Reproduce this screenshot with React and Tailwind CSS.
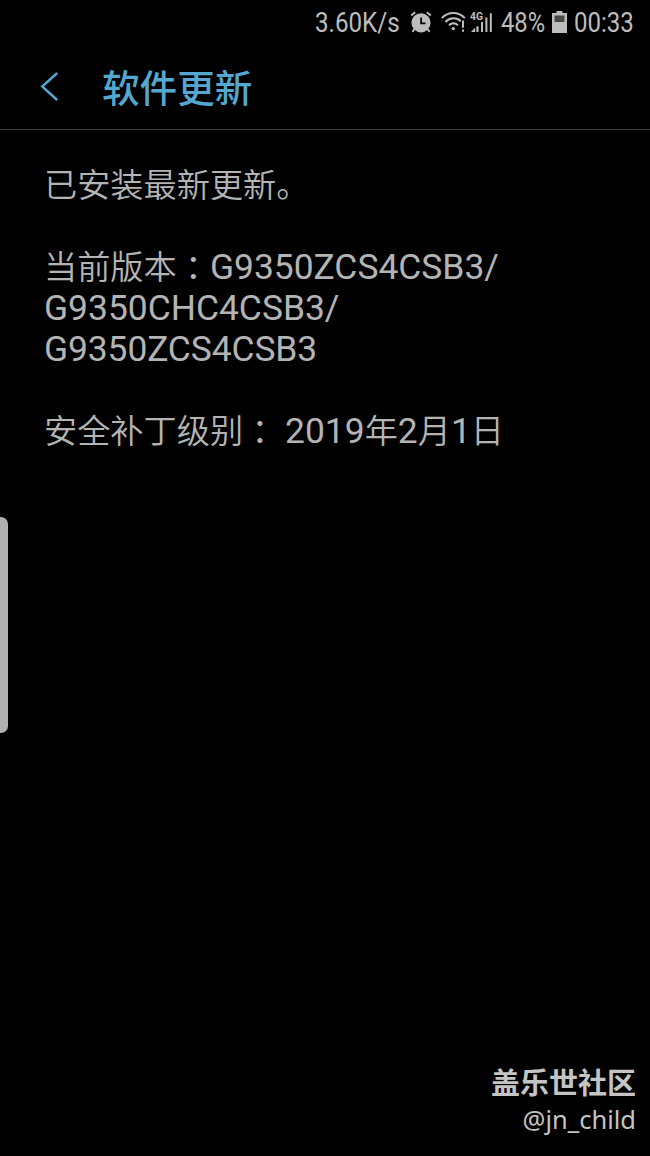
import React from 'react';

const AlarmIcon = () => (
  <svg className="w-[22px] h-[22px]" viewBox="0 0 22 22" fill="none">
    <circle cx="11" cy="11.8" r="9.6" fill="#bdbdbd" />
    <path d="M1.2 4.6 5.2 1.2M20.8 4.6 16.8 1.2" stroke="#bdbdbd" strokeWidth="2" />
    <path d="M4.5 18 2.4 20.8M17.5 18l2.1 2.8" stroke="#bdbdbd" strokeWidth="2" />
    <path d="M11.1 6.4v6h4.4" stroke="#050505" strokeWidth="1.8" />
  </svg>
);

const WifiIcon = () => (
  <svg className="w-[25px] h-[22px]" viewBox="0 0 25 22" fill="none" stroke="#bdbdbd">
    <path d="M.8 7.2C7 .3 17.6.3 23.8 7.2" strokeWidth="2" />
    <path d="M4.4 11c4.4-4.8 11.4-4.8 15.4-.8" strokeWidth="2" />
    <path d="M8 14.4c2.6-2.8 6.4-2.8 9 0" strokeWidth="2" />
    <circle cx="12.3" cy="17.6" r="1.7" fill="#bdbdbd" stroke="none" />
    <path d="M22 9.4v7.4M22 18.6v2.2" strokeWidth="2" />
  </svg>
);

const SignalIcon = () => (
  <svg className="w-[23px] h-[22px]" viewBox="0 0 23 22" fill="#bdbdbd">
    <text x="0" y="8.8" fontSize="10.5" fontWeight="700" fontFamily="Roboto, sans-serif" textLength="13" lengthAdjust="spacingAndGlyphs">4G</text>
    <path d="M1 21l4.2-4.6V21zM6.4 15.2h2.2V21H6.4zM11 11h2v10h-2zM15.4 6.6h2V21h-2zM19.8 2.2h2V21h-2z" />
  </svg>
);

const BatteryIcon = () => (
  <svg className="w-[15px] h-[22px]" viewBox="0 0 15 22">
    <path d="M4.5 0h6v2H15v20H0V2h4.5z" fill="#bdbdbd" />
    <path d="M2.5 4.5h10v6.5h-10z" fill="#484848" />
  </svg>
);

const StatusBar = () => (
  <div className="flex h-[46px] w-full text-[27.3px] leading-[46px] text-[#bdbdbd] whitespace-nowrap">
    <div className="w-[95px] ml-[315px]">
      <span className="inline-block origin-left scale-x-[0.885]">3.60K/s</span>
    </div>
    <div className="mt-[11px] w-[31px]"><AlarmIcon /></div>
    <div className="mt-[11px] w-[29px]"><WifiIcon /></div>
    <div className="mt-[11px] w-[31px]"><SignalIcon /></div>
    <div className="w-[51px]">
      <span className="inline-block origin-left scale-x-[0.87]">48%</span>
    </div>
    <div className="mt-[11px] w-[22px]"><BatteryIcon /></div>
    <div className="w-[60px]">
      <span className="inline-block origin-left scale-x-[0.88]">00:33</span>
    </div>
  </div>
);

const Header = () => (
  <header className="flex h-[84px] items-center border-b border-[#3a3a3a] pl-[40px] pb-[3px]">
    <svg className="w-[19px] h-[30px]" viewBox="0 0 19 30" fill="none">
      <path d="M17.2 2 2.2 15.5l15 13.5" stroke="#54a8d0" strokeWidth="2.4" />
    </svg>
    <h1 className="ml-[43px] font-['Noto_Sans_CJK_SC',sans-serif] text-[37.6px] font-medium leading-[50px] text-[#54a8d0]">
      软件更新
    </h1>
  </header>
);

// Chinese glyphs run slightly smaller than the latin ones beside them
const Zh = ({ children }) => (
  <span className="font-['Noto_Sans_CJK_SC',sans-serif] text-[33.2px] font-[350] leading-none">{children}</span>
);

// The traditional font centres the full-width colon
const Colon = () => (
  <span className="inline-block translate-y-px font-['Noto_Sans_CJK_TC',sans-serif] text-[33.2px] leading-none" lang="zh-TW">：</span>
);

const App = () => {
  return (
    <div className="relative flex h-[1156px] w-[650px] flex-col overflow-hidden bg-black font-[Roboto,'Noto_Sans_CJK_SC',sans-serif]">
      <StatusBar />
      <Header />
      <main className="flex-1 pl-[44px] pt-[35px] text-[35.4px] leading-[41px] text-[#b4b4b4] whitespace-nowrap">
        <p className="h-[41px]"><Zh>已安装最新更新。</Zh></p>
        <p className="mt-[41px] h-[41px]"><Zh>当前版本</Zh><Colon />G9350ZCS4CSB3/</p>
        <p className="h-[41px]">G9350CHC4CSB3/</p>
        <p className="h-[41px] tracking-[-0.1px]">G9350ZCS4CSB3</p>
        <p className="mt-[41px] h-[41px]">
          <Zh>安全补丁级别</Zh><Colon /> 2019<Zh>年</Zh>2<Zh>月</Zh>1<Zh>日</Zh>
        </p>
      </main>
      <footer className="flex flex-col items-end pr-[14px] pb-[19px] text-[#c4c4c4]">
        <div className="font-['Noto_Sans_CJK_SC',sans-serif] text-[29px] font-bold leading-[38px] mb-px">盖乐世社区</div>
        <div className="font-['Noto_Sans',sans-serif] text-[25.5px] leading-[36px]">@jn_child</div>
      </footer>
      {/* edge panel handle */}
      <div className="absolute left-0 top-[517px] h-[216px] w-[8px] rounded-r-[7px] bg-[#b0b0b0]" />
    </div>
  );
};

export default App;
